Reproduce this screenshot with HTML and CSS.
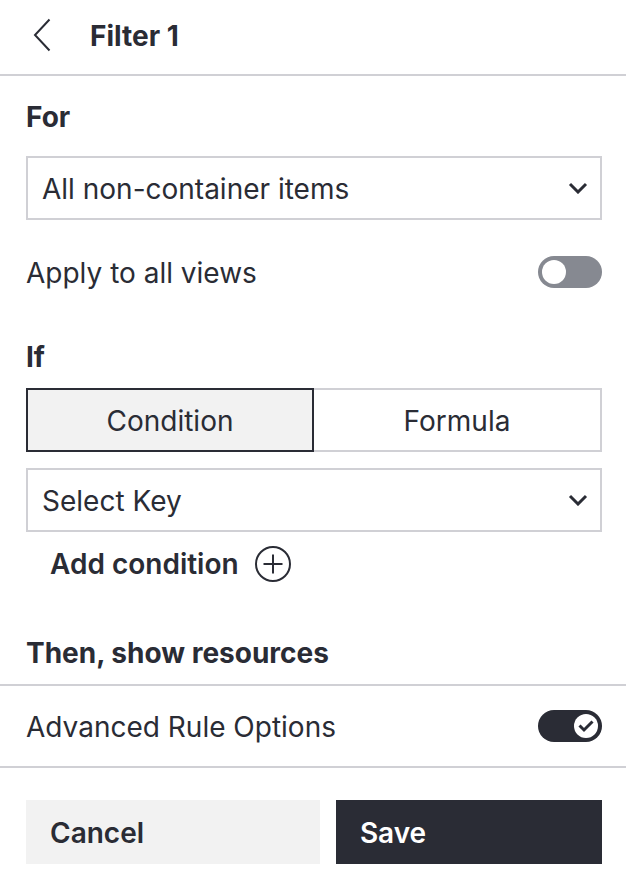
FILE: index.html
```html
<!DOCTYPE html>
<html lang="en">
<head>
    <meta charset="UTF-8">
    <meta name="viewport" content="width=device-width, initial-scale=1.0">
    <title>Filter 1</title>
    <link rel="stylesheet" href="styles.css">
</head>
<body>
    <form class="panel">
        <header class="panel-header">
            <button type="button" class="back" aria-label="Back">
                <svg width="32" height="36" viewBox="0 0 32 36"><path d="M23.500 2.500L9 18L23.500 33.500"/></svg>
            </button>
            <h1>Filter 1</h1>
        </header>

        <div class="section">
            <h2><label for="target">For</label></h2>
            <div class="select">
                <select id="target">
                    <option>All non-container items</option>
                </select>
                <svg width="20" height="12" viewBox="0 0 20 12"><path d="M2 2L10 10L18 2"/></svg>
            </div>
            <div class="row">
                <label for="all-views">Apply to all views</label>
                <div class="toggle">
                    <input type="checkbox" id="all-views">
                    <svg width="24" height="24" viewBox="0 0 24 24"><path d="M5 12L10 17L19 7"/></svg>
                </div>
            </div>
        </div>

        <div class="section conditions">
            <h2>If</h2>
            <div class="tabs">
                <button type="button" class="tab active">Condition</button>
                <button type="button" class="tab">Formula</button>
            </div>
            <div class="select">
                <select aria-label="Key">
                    <option>Select Key</option>
                </select>
                <svg width="20" height="12" viewBox="0 0 20 12"><path d="M2 2L10 10L18 2"/></svg>
            </div>
            <button type="button" class="add">
                Add condition
                <svg width="36" height="36" viewBox="0 0 36 36"><circle cx="18" cy="18" r="17"/><path d="M18 8.500V27.500M8.500 18H27.500"/></svg>
            </button>
        </div>

        <h2 class="then">Then, show resources</h2>
        <div class="row advanced">
            <label for="advanced">Advanced Rule Options</label>
            <div class="toggle">
                <input type="checkbox" id="advanced" checked>
                <svg width="24" height="24" viewBox="0 0 24 24"><path d="M5.500 11.500L10 16L18.500 7.500"/></svg>
            </div>
        </div>

        <footer class="actions">
            <button type="button" class="cancel">Cancel</button>
            <button type="submit" class="save">Save</button>
        </footer>
    </form>
</body>
</html>
```
FILE: styles.css
```css
* {
    box-sizing: border-box;
}
body {
    margin: 0;
    background-color: #fff;
    color: #2a2c35;
    font-family: Inter, "Liberation Sans", sans-serif;
    font-size: 28px;
    line-height: 40px;
}
h1, h2 {
    margin: 0;
    padding-top: 2px;
    font-size: 28px;
    font-weight: 700;
    line-height: 38px;
}
button, select {
    font: inherit;
    color: inherit;
    border-radius: 0;
    cursor: pointer;
}
label {
    padding-top: 2px;
}
svg {
    display: block;
    fill: none;
    stroke: #2a2c35;
    stroke-width: 2;
}
.panel-header {
    display: flex;
    align-items: center;
    gap: 32px;
    height: 76px;
    padding: 0 24px 4px 26px;
    border-bottom: 2px solid #d0d0d5;
}
.back {
    padding: 0;
    border: none;
    background: none;
}
.section {
    padding: 20px 24px 0 26px;
}
.section .select {
    margin-top: 20px;
}
.select {
    position: relative;
}
.select select {
    display: block;
    width: 100%;
    height: 64px;
    padding: 2px 48px 0 14px;
    border: 2px solid #d0d0d5;
    background-color: #fff;
    appearance: none;
}
.select svg {
    position: absolute;
    top: 26px;
    right: 14px;
    stroke-width: 3;
    pointer-events: none;
}
.row {
    display: flex;
    align-items: center;
    justify-content: space-between;
    height: 104px;
}
.toggle {
    position: relative;
    width: 64px;
    height: 32px;
}
.toggle input {
    display: block;
    width: 64px;
    height: 32px;
    margin: 0;
    border-radius: 16px;
    background-color: #868991;
    appearance: none;
    cursor: pointer;
}
.toggle svg {
    position: absolute;
    top: 4px;
    left: 4px;
    border-radius: 50%;
    background-color: #fff;
    stroke: none;
    stroke-width: 3;
    pointer-events: none;
}
.toggle input:checked {
    background-color: #2a2c35;
}
.toggle input:checked + svg {
    left: 36px;
    stroke: #2a2c35;
}
.conditions {
    padding-top: 12px;
}
.tabs {
    display: grid;
    grid-template-columns: 1fr 1fr;
    margin-top: 12px;
}
.tab {
    height: 64px;
    padding: 2px 0 0;
    border: 2px solid #d0d0d5;
    border-left: none;
    background-color: #fff;
}
.tab.active {
    border: 2px solid #2a2c35;
    background-color: #f2f2f2;
}
.section .tabs + .select {
    margin-top: 16px;
}
.add {
    display: flex;
    align-items: center;
    gap: 16px;
    height: 64px;
    padding: 0 24px;
    border: none;
    background: none;
    font-weight: 600;
}
.then {
    padding: 38px 24px 12px 26px;
}
.advanced {
    height: 84px;
    padding: 0 24px 0 26px;
    border-top: 2px solid #d0d0d5;
    border-bottom: 2px solid #d0d0d5;
}
.actions {
    display: flex;
    gap: 16px;
    padding: 32px 24px 28px 26px;
}
.actions button {
    flex: 1 1 auto;
    height: 64px;
    padding: 2px 24px 0;
    border: none;
    font-weight: 600;
    text-align: left;
}
.cancel {
    background-color: #f2f2f2;
}
.save {
    background-color: #2a2c35;
    color: #fff;
}
```
